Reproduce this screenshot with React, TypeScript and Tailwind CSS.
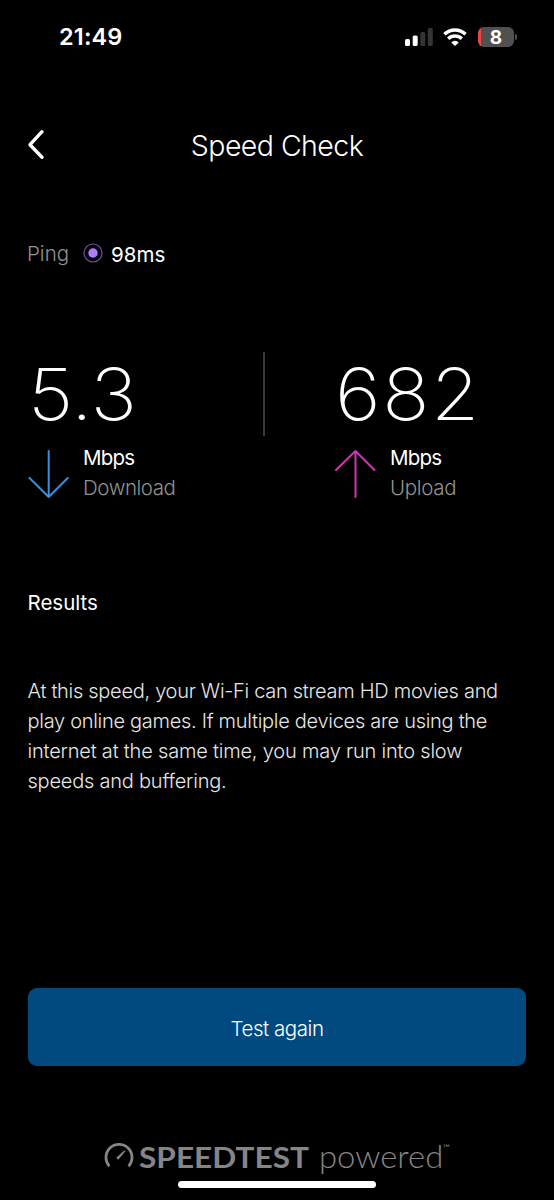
import type { ReactNode } from "react";

function StatusBar() {
  return (
    <div className="flex h-[74px] items-center justify-between pl-[59px] pr-[37px]">
      <span className="text-[23.5px] leading-[30px] font-semibold tracking-[0.15px]">21:49</span>
      <div className="flex items-center">
        <svg width="28" height="18" viewBox="0 0 28 18">
          <rect x="0" y="11" width="5" height="7" rx="1.5" fill="#fff" />
          <rect x="7.7" y="7.5" width="5" height="10.5" rx="1.5" fill="#fff" />
          <rect x="15.3" y="4" width="5" height="14" rx="1.5" fill="#343434" />
          <rect x="22.8" y="0" width="5" height="18" rx="1.5" fill="#343434" />
        </svg>
        <svg className="ml-[10px]" width="24" height="18" viewBox="0 0 24 18" fill="none" stroke="#fff" strokeWidth="3.4">
          <path d="M1.4 6.3a15.3 15.3 0 0 1 21.2 0" />
          <path d="M5.2 10.8a9.8 9.8 0 0 1 13.6 0" />
          <path d="M12 18L8.3 14.4a5.2 5.2 0 0 1 7.4 0z" fill="#fff" stroke="none" />
        </svg>
        <div className="ml-[11px] flex h-[20px] w-[36px] items-center justify-center rounded-[6px] bg-linear-to-r from-[#f0453c] from-[3px] to-[#505050] to-[3px] pt-px text-[19px] leading-[19px] font-bold">
          8
        </div>
        <div className="ml-[1px] h-[6px] w-[2px] rounded-r-full bg-[#505050]" />
      </div>
    </div>
  );
}

function Metric({ value, label, icon }: { value: ReactNode; label: ReactNode; icon: ReactNode }) {
  return (
    <div>
      <div className="h-[91px] origin-left scale-x-[1.086] text-[72px] leading-[83px] font-extralight">{value}</div>
      <div className="flex">
        {icon}
        <div className="ml-[14px] text-[20.5px] leading-[30px]">
          <div className="tracking-[-0.75px]">Mbps</div>
          <div className="font-light text-[#929292]">{label}</div>
        </div>
      </div>
    </div>
  );
}

export default function App() {
  return (
    <main className="flex h-[1200px] w-[554px] flex-col overflow-hidden bg-black font-['Inter','Liberation_Sans',sans-serif] text-white">
      <StatusBar />
      <header className="mt-[42px] grid h-[60px] grid-cols-[60px_1fr_60px] items-center">
        <button aria-label="Back" className="pb-[2px] pl-[27px]">
          <svg width="18" height="32" viewBox="0 0 18 32" fill="none" stroke="#fff" strokeWidth="3.4" strokeLinecap="round" strokeLinejoin="round">
            <path d="M15 2.7L3 15.7L15 28.2" />
          </svg>
        </button>
        <h1 className="text-center text-[28.5px] leading-[60px] font-light tracking-[-0.55px]">Speed Check</h1>
      </header>
      <div className="mt-[61px] flex h-[32px] items-center px-[27px] text-[20.5px] leading-[30px]">
        <span className="pt-[2px] font-light text-[#929292]">Ping</span>
        <svg className="ml-[14px]" width="20" height="20" viewBox="0 0 20 20">
          <circle cx="10" cy="10" r="9" fill="none" stroke="#7851b5" strokeWidth="1.2" />
          <circle cx="10" cy="10" r="4.7" fill="#ae7cff" />
        </svg>
        <span className="ml-[8px] pt-[3px]">98ms</span>
      </div>
      <section className="mt-[83px] flex h-[160px]">
        <div className="w-[236px] pl-[28px]">
          <Metric
            value="5.3"
            label={<span className="tracking-[-0.45px]">Download</span>}
            icon={
              <svg className="mt-[6px]" width="41" height="50" viewBox="0 0 41 50" fill="none" stroke="#3b8fdc" strokeWidth="2" strokeLinecap="round" strokeLinejoin="round">
                <path d="M20.7 2V48M1.5 29L20.7 48L39.7 29" />
              </svg>
            }
          />
        </div>
        <div className="ml-[27px] h-[84px] w-[2px] bg-[#3a3a3a]" />
        <div className="ml-[70px]">
          <Metric
            value={<span className="tracking-[1.5px]">682</span>}
            label={<span className="tracking-[-0.3px]">Upload</span>}
            icon={
              <svg className="mt-[6px]" width="41" height="50" viewBox="0 0 41 50" fill="none" stroke="#cf36b1" strokeWidth="2" strokeLinecap="round" strokeLinejoin="round">
                <path d="M20.5 48V2M1 21L20.5 2L39.5 21" />
              </svg>
            }
          />
        </div>
      </section>
      <section className="mt-[76px] pl-[27.5px]">
        <h2 className="text-[20.5px] leading-[30px]">Results</h2>
        <p className="mt-[58px] text-[20px] leading-[30px] font-light tracking-[-0.29px] text-[#e6e6e6]">
          At this speed, your Wi-Fi can stream HD movies and<br />
          play online games. If multiple devices are using the<br />
          <span className="tracking-[-0.2px]">internet at the same time, you may run into slow</span><br />
          <span className="tracking-[-0.22px]">speeds and buffering.</span>
        </p>
      </section>
      <button className="mx-[28px] mt-[192px] h-[78px] shrink-0 rounded-[9px] bg-[#004a80] pt-[4px] text-[20.5px] leading-[30px] font-light tracking-[-0.45px]">
        Test again
      </button>
      <footer className="mt-[75px] flex h-[35px] shrink-0 pl-[104px] font-['Lato',sans-serif] text-[#858585]">
        <svg width="30" height="28" viewBox="0 0 30 28" fill="none" stroke="#858585">
          <path d="M5.4 25.2A13 13 0 1 1 24.6 25.2" strokeWidth="2.8" />
          <path d="M12.2 16.7L20.5 9.3L21.4 10.2L14.2 18.8Z" fill="#858585" stroke="none" />
        </svg>
        <span className="ml-[5px] w-[180px] origin-left scale-x-[1.09] text-[29px] leading-[32px] font-bold">SPEEDTEST</span>
        <span className="w-[124px] origin-left scale-x-[1.06] text-[31px] leading-[31px] font-light">powered</span>
        <span className="pt-[2px] text-[9px] leading-[10px]">™</span>
      </footer>
      <div className="mx-auto mt-[5px] h-[7px] w-[198px] shrink-0 rounded-full bg-white" />
    </main>
  );
}
